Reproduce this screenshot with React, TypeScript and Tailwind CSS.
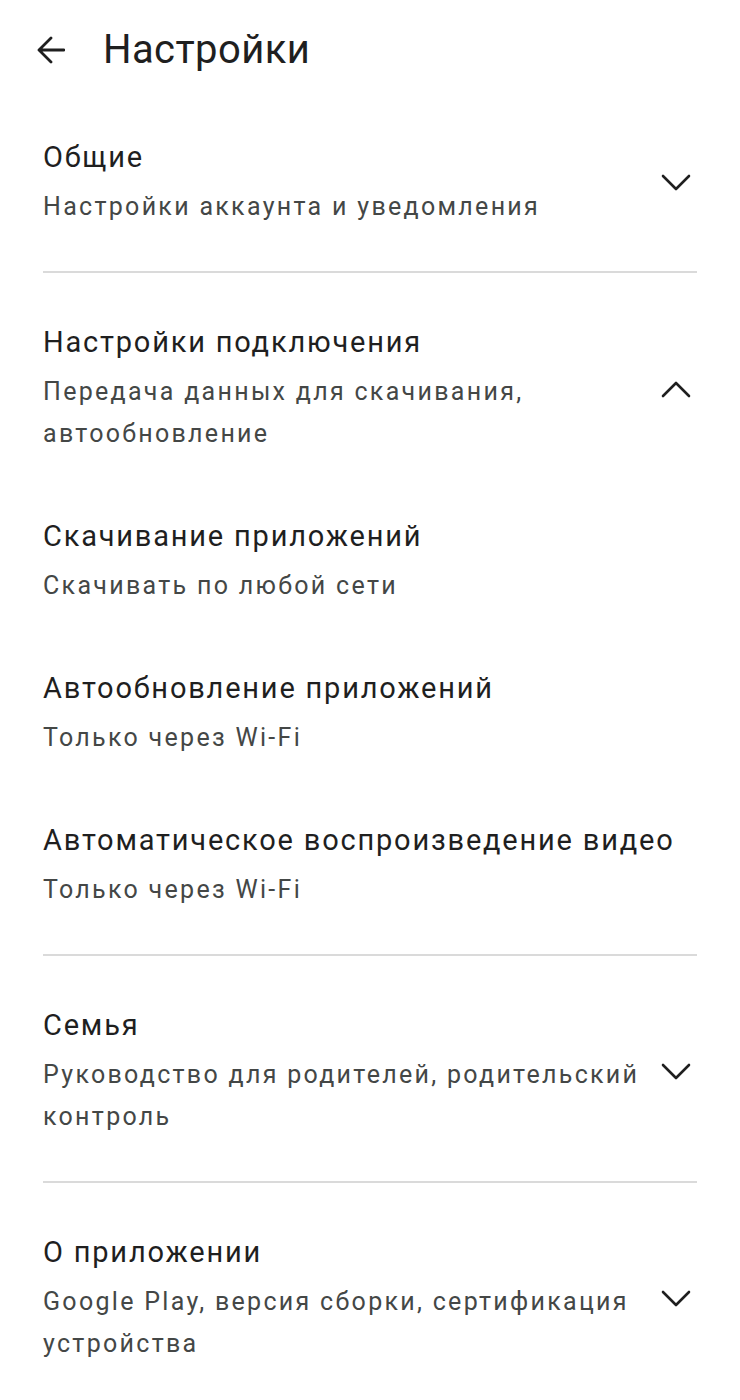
import React from "react";

type Item = {
  title: string;
  subtitle: string;
  chevron?: "down" | "up";
};

const Chevron = ({ dir }: { dir: "down" | "up" }) => (
  <svg width="30" height="18" viewBox="0 0 30 18" fill="none" className="shrink-0">
    <polyline
      points={dir === "down" ? "2,2 15,15 28,2" : "2,16 15,3 28,16"}
      stroke="#1f1f1f"
      strokeWidth="2.6"
      strokeLinecap="round"
      strokeLinejoin="round"
    />
  </svg>
);

function Row({ title, subtitle, chevron }: Item) {
  return (
    <div className="flex items-center py-[31px]">
      <div className="min-w-0 flex-1">
        <div className="text-[29px] leading-[38px] tracking-[1.8px] text-[#1f1f1f]">{title}</div>
        <div className="mt-[10px] text-[25px] leading-[42px] tracking-[2.3px] text-[#444746]">
          {subtitle}
        </div>
      </div>
      {chevron && (
        <div className="flex w-[40px] shrink-0 justify-end pr-[6px]">
          <Chevron dir={chevron} />
        </div>
      )}
    </div>
  );
}

function Section({ items, last }: { items: Item[]; last?: boolean }) {
  return (
    <div className={last ? "pt-[19px]" : "border-b-2 border-[#dadada] pb-[12px] pt-[19px]"}>
      {items.map((it) => (
        <Row key={it.title} {...it} />
      ))}
    </div>
  );
}

export default function App() {
  return (
    <div
      className="min-h-[1400px] w-[740px] bg-white"
      style={{ fontFamily: "Roboto, 'Noto Sans', sans-serif" }}
    >
      <header className="flex h-[88px] items-center gap-[38px] pl-[37px] pt-3">
        <svg width="28" height="28" viewBox="0 0 28 28" fill="none">
          <path
            d="M27 14H3M14 2L2 14l12 12"
            stroke="#1f1f1f"
            strokeWidth="2.8"
            strokeLinecap="round"
            strokeLinejoin="round"
          />
        </svg>
        <h1 className="text-[40px] leading-[48px] tracking-[0.4px] text-[#1f1f1f]">Настройки</h1>
      </header>

      <div className="mx-[43px]">
        <Section
          items={[
            { title: "Общие", subtitle: "Настройки аккаунта и уведомления", chevron: "down" },
          ]}
        />
        <Section
          items={[
            {
              title: "Настройки подключения",
              subtitle: "Передача данных для скачивания, автообновление",
              chevron: "up",
            },
            { title: "Скачивание приложений", subtitle: "Скачивать по любой сети" },
            { title: "Автообновление приложений", subtitle: "Только через Wi-Fi" },
            { title: "Автоматическое воспроизведение видео", subtitle: "Только через Wi-Fi" },
          ]}
        />
        <Section
          items={[
            {
              title: "Семья",
              subtitle: "Руководство для родителей, родительский контроль",
              chevron: "down",
            },
          ]}
        />
        <Section
          last
          items={[
            {
              title: "О приложении",
              subtitle: "Google Play, версия сборки, сертификация устройства",
              chevron: "down",
            },
          ]}
        />
      </div>
    </div>
  );
}
